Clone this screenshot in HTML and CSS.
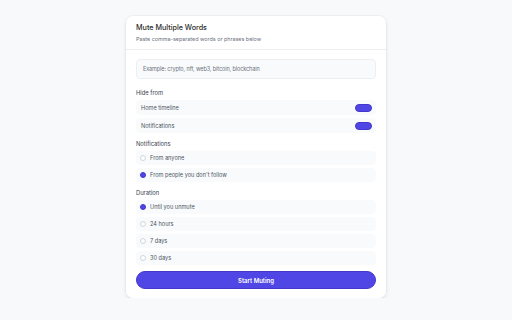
FILE: index.html
```html
<!DOCTYPE html>
<html lang="en">
<head>
    <meta charset="UTF-8">
    <meta name="viewport" content="width=device-width, initial-scale=1.0">
    <title>Mute Multiple Words</title>
    <link rel="stylesheet" href="styles.css">
</head>
<body>

    <!-- Mute card -->
    <div class="card">
        <div class="card-header">
            <h1 class="title">Mute Multiple Words</h1>
            <p class="subtitle">Paste comma-separated words or phrases below</p>
        </div>

        <div class="card-body">
            <div class="words-input">Example: crypto, nft, web3, bitcoin, blockchain</div>

            <div class="section hide-from">
                <div class="section-label">Hide from</div>
                <div class="row toggle-row">
                    <span>Home timeline</span>
                    <span class="toggle"></span>
                </div>
                <div class="row toggle-row">
                    <span>Notifications</span>
                    <span class="toggle"></span>
                </div>
            </div>

            <div class="section">
                <div class="section-label">Notifications</div>
                <div class="row radio-row">
                    <span class="radio"></span>
                    <span>From anyone</span>
                </div>
                <div class="row radio-row">
                    <span class="radio checked"></span>
                    <span>From people you don't follow</span>
                </div>
            </div>

            <div class="section">
                <div class="section-label">Duration</div>
                <div class="row radio-row">
                    <span class="radio checked"></span>
                    <span>Until you unmute</span>
                </div>
                <div class="row radio-row">
                    <span class="radio"></span>
                    <span>24 hours</span>
                </div>
                <div class="row radio-row">
                    <span class="radio"></span>
                    <span>7 days</span>
                </div>
                <div class="row radio-row">
                    <span class="radio"></span>
                    <span>30 days</span>
                </div>
            </div>

            <button class="start-btn">Start Muting</button>
        </div>
    </div>

</body>
</html>
```

FILE: styles.css
```css
body {
    margin: 0;
    background: #f8f9fa;
    font-family: Inter, "Noto Sans", sans-serif;
    color: #374151;
    display: flex;
    justify-content: center;
    padding-top: 16px;
}
.card {
    width: 260px;
    background: #fff;
    border-radius: 7px;
    box-shadow: 0 0 0 1px rgba(0, 0, 0, 0.03), 0 2px 5px rgba(0, 0, 0, 0.08);
}
.card-header {
    padding: 7px 10px 6px;
    border-bottom: 1px solid #eceef1;
}
.title {
    margin: 0;
    font-size: 7.2px;
    line-height: 10px;
    font-weight: 500;
    color: #2a2a2a;
}
.subtitle {
    margin: 2px 0 0;
    font-size: 5.4px;
    line-height: 8px;
    color: #6b7280;
}
.card-body {
    padding: 9px 10px 9px;
    display: flex;
    flex-direction: column;
    gap: 6px;
}
.words-input {
    height: 20px;
    box-sizing: border-box;
    border: 1px solid #eceef1;
    border-radius: 4px;
    background: #f9fafb;
    padding-left: 6px;
    display: flex;
    align-items: center;
    font-size: 5.5px;
    letter-spacing: -0.1px;
    color: #6b7280;
}
.section {
    display: flex;
    flex-direction: column;
    gap: 3px;
}
.hide-from {
    margin-top: 3px;
}
.section-label {
    font-size: 5.8px;
    line-height: 10px;
    height: 10px;
    margin-bottom: -1px;
    color: #374151;
}
.row {
    display: flex;
    align-items: center;
    background: #f9fafb;
    border-radius: 4px;
    font-size: 5.6px;
    color: #4b5563;
    box-sizing: border-box;
}
.toggle-row {
    height: 15px;
    justify-content: space-between;
    padding: 0 4px 0 5px;
}
.radio-row {
    height: 14px;
    padding-left: 4px;
    gap: 4px;
}
.toggle {
    width: 17px;
    height: 8px;
    box-sizing: border-box;
    border-radius: 4px;
    background: #4f46e5;
    border: 1px solid #4338ca;
}
.radio {
    width: 6px;
    height: 6px;
    box-sizing: border-box;
    border-radius: 50%;
    border: 0.8px solid #d1d5db;
    background: #fff;
}
.radio.checked {
    background: #4f46e5;
    border-color: #4338ca;
}
.start-btn {
    height: 18px;
    border: 1px solid #4338ca;
    border-radius: 9px;
    background: #4f46e5;
    color: #fff;
    font-family: inherit;
    font-size: 6px;
    font-weight: 600;
    cursor: pointer;
}
```
